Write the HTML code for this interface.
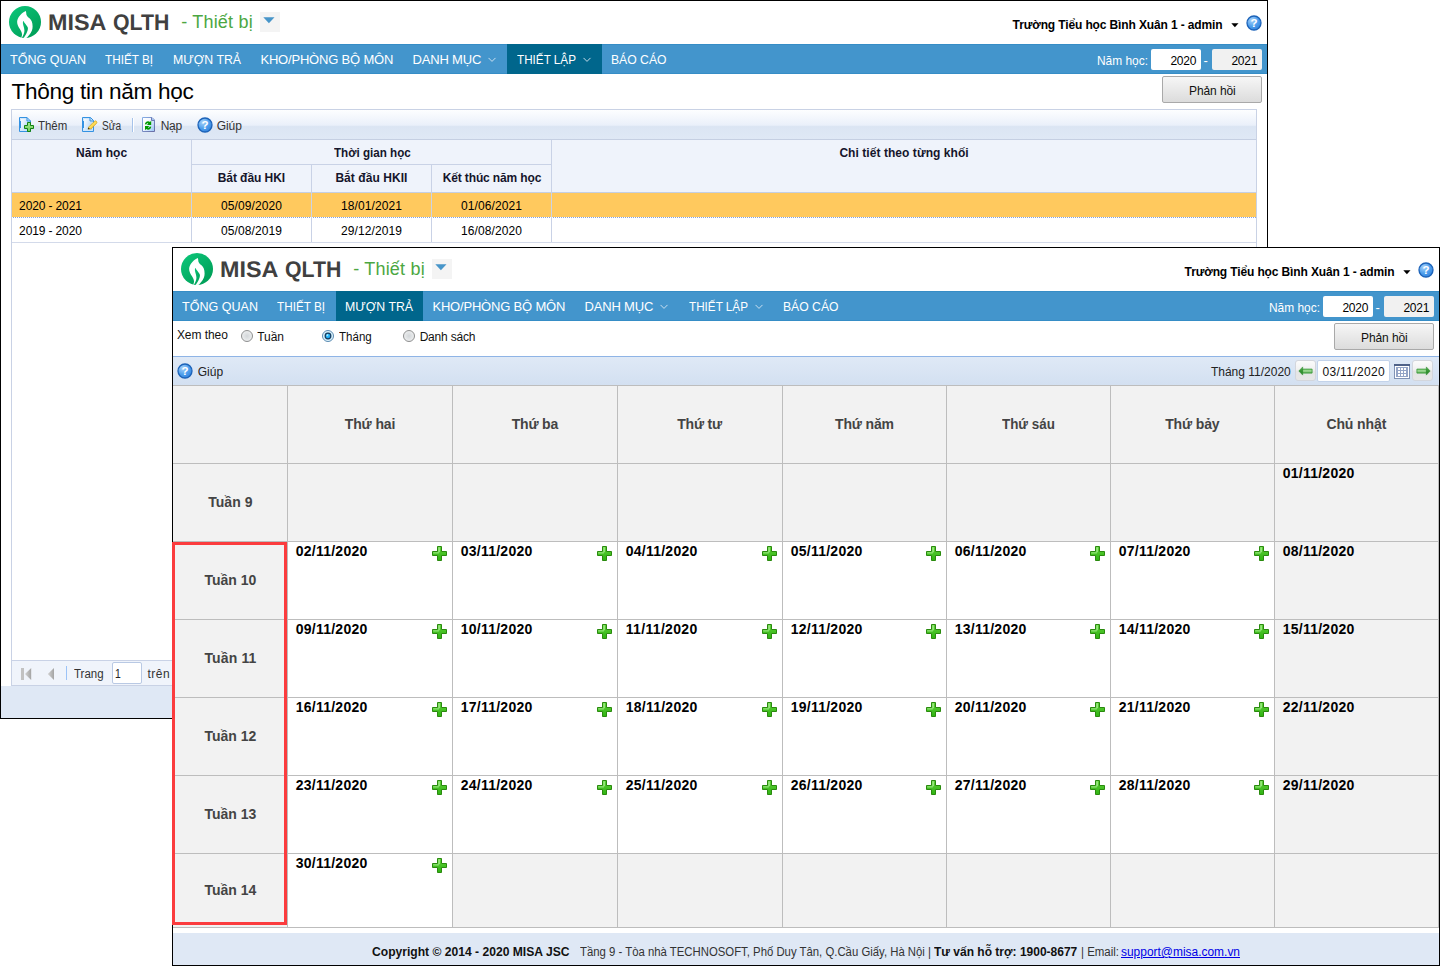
<!DOCTYPE html>
<html lang="vi"><head><meta charset="utf-8"><title>MISA QLTH - Thiết bị</title><style>
html,body{margin:0;padding:0;background:#fff}
body{width:1440px;height:966px;position:relative;overflow:hidden;font-family:"Liberation Sans",sans-serif}
.win{position:absolute;width:1268px;height:719px;background:#fff;overflow:hidden}
.frame{position:absolute;left:0;top:0;right:0;bottom:0;border:1px solid #000;pointer-events:none}
.a,.t,.btn,.panel,.tb1,.tb2,.nb{position:absolute;display:block}
.t{white-space:pre;transform-origin:0 0;margin:0;font-style:normal;font-weight:400;text-decoration:none}
.hd{position:absolute;left:0;top:0;width:1268px;height:44px}
.nav{position:absolute;left:0;top:44px;width:1268px;height:30px;background:#4395cc;box-shadow:inset 0 1px 0 #368dc6,inset 0 -1px 0 #368dc6}
.btn{box-sizing:border-box;border:1px solid #a9a9a9;border-radius:2px;background:linear-gradient(#f6f6f6,#e9e9e9 50%,#dcdcdc)}
.panel{box-sizing:border-box;border:1px solid #c9d2e5;background:#fff}
.tb1{background:linear-gradient(#fdfeff 0,#eaf0fa 52%,#dbe5f3 57%,#dfe8f5 100%)}
.tb2{box-sizing:border-box;border-top:1px solid #8fb4e6;background:linear-gradient(#dfe9f6,#d3e0f1)}
.nb{box-sizing:border-box;border:1px solid #d3d6dc;border-radius:3px;background:linear-gradient(#fbfbfb,#f1f1f1 45%,#e5e5e5 55%,#e7e7e7)}
</style></head><body><div class="win" style="left:0;top:0">
<div class="hd">
<svg class="a" style="left:9px;top:6px" width="32" height="32" viewBox="0 0 32 32"><defs><linearGradient id="lg1" x1="0.15" y1="0.1" x2="0.85" y2="0.9"><stop offset="0" stop-color="#0ac276"/><stop offset="1" stop-color="#009f58"/></linearGradient><clipPath id="lc1"><circle cx="16" cy="16" r="16"/></clipPath></defs><circle cx="16" cy="16" r="16" fill="url(#lg1)"/><g clip-path="url(#lc1)"><path fill="#fff" d="M16.7,4.9 C13.2,6.6 9.4,10 8.4,14 C7.6,17 8.8,19.5 10.5,22.5 C12,25 13.3,27 13,29 C12.9,30.3 12.5,31.2 11.8,32.2 L17.4,32.2 C20,29.5 23.6,26 23.6,20.5 C23.6,16.5 22.5,14 20.5,12.3 C18.5,11 17.2,9.5 17.2,7 C17.2,6 17,5.3 16.7,4.9 Z"/><path fill="url(#lg1)" d="M14.3,14.8 C15,16.5 17.5,19 18.6,21 C19.3,22.5 18.8,25 17.4,27.5 C16.5,29.3 15.3,31 14.3,32.3 L12.6,32.3 C14,30 15.3,27.5 15.4,25 C15.5,22.5 14.5,20.5 14,18 C13.8,16.8 13.9,15.5 14.3,14.8 Z"/></g></svg>
<b class="t" style="left:47.90px;top:10.70px;font-size:22.7px;line-height:22.7px;font-weight:700;transform:scaleX(1.0296);color:#404040;text-rendering:geometricPrecision;">MISA</b>
<b class="t" style="left:112.70px;top:10.70px;font-size:22.7px;line-height:22.7px;font-weight:700;transform:scaleX(0.9388);color:#404040;text-rendering:geometricPrecision;">QLTH</b>
<span class="t" style="left:181.20px;top:12.50px;font-size:18px;line-height:18px;letter-spacing:0.200px;color:#4ca742;">- Thiết bị</span>
<div class="a" style="left:260px;top:12px;width:20px;height:20px;background:#f4f4f4"></div>
<svg class="a" style="left:263px;top:17px" width="12" height="7" viewBox="0 0 12 7"><path d="M0.3,0.3 L11.5,0.3 L5.9,6.2 Z" fill="#4795c9"/></svg>
<b class="t" style="left:1012.60px;top:19.20px;font-size:12px;line-height:12px;font-weight:700;letter-spacing:-0.128px;color:#000;">Trường Tiểu học Bình Xuân 1 - admin</b>
<svg class="a" style="left:1231px;top:23px" width="8" height="5" viewBox="0 0 8 5"><path d="M0.3,0.2 L7.5,0.2 L3.9,4.2 Z" fill="#000"/></svg>
<svg class="a" style="left:1246px;top:15px" width="16" height="16" viewBox="0 0 16 16"><defs><radialGradient id="hg1a" cx="0.35" cy="0.3" r="0.8"><stop offset="0" stop-color="#a9d2fa"/><stop offset="0.55" stop-color="#4f9fec"/><stop offset="1" stop-color="#2f7fdc"/></radialGradient></defs><circle cx="8" cy="8" r="7" fill="url(#hg1a)" stroke="#1c62b8" stroke-width="1.3"/><text x="8" y="12" text-anchor="middle" font-family="Liberation Sans, sans-serif" font-weight="700" font-size="11.5" fill="#fff">?</text></svg>
</div>
<div class="nav">
<a class="t" style="left:10.40px;top:9.25px;font-size:13px;line-height:13px;transform:scaleX(0.9653);color:#fff;">TỔNG QUAN</a>
<a class="t" style="left:105.40px;top:9.25px;font-size:13px;line-height:13px;transform:scaleX(0.9019);color:#fff;">THIẾT BỊ</a>
<a class="t" style="left:173.40px;top:9.25px;font-size:13px;line-height:13px;transform:scaleX(0.9465);color:#fff;">MƯỢN TRẢ</a>
<a class="t" style="left:260.40px;top:9.25px;font-size:13px;line-height:13px;letter-spacing:-0.186px;color:#fff;">KHO/PHÒNG BỘ MÔN</a>
<a class="t" style="left:412.40px;top:9.25px;font-size:13px;line-height:13px;letter-spacing:-0.152px;color:#fff;">DANH MỤC</a>
<svg class="a" style="left:488.3px;top:13.3px" width="9" height="6" viewBox="0 0 9 6"><path d="M0.5,0.9 L4,4.4 L7.5,0.9" fill="none" stroke="#dbe9f5" stroke-width="0.9"/></svg>
<div class="a" style="left:507px;top:0;width:95px;height:30px;background:#00668c"></div>
<a class="t" style="left:516.90px;top:9.25px;font-size:13px;line-height:13px;transform:scaleX(0.9005);color:#fff;">THIẾT LẬP</a>
<svg class="a" style="left:582.8px;top:13.3px" width="9" height="6" viewBox="0 0 9 6"><path d="M0.5,0.9 L4,4.4 L7.5,0.9" fill="none" stroke="#dbe9f5" stroke-width="0.9"/></svg>
<a class="t" style="left:611.40px;top:9.25px;font-size:13px;line-height:13px;transform:scaleX(0.9367);color:#fff;">BÁO CÁO</a>
<span class="t" style="left:1096.60px;top:9.70px;font-size:13px;line-height:13px;transform:scaleX(0.9166);color:#fff;">Năm học:</span>
<div class="a" style="left:1151.3px;top:5.4px;width:49.5px;height:20.8px;background:#fff;border-radius:2px"></div>
<span class="t" style="left:1170.40px;top:10.70px;font-size:12px;line-height:12px;letter-spacing:-0.234px;color:#000;">2020</span>
<span class="t" style="left:1203.60px;top:9.70px;font-size:13px;line-height:13px;letter-spacing:1.056px;color:#fff;">-</span>
<div class="a" style="left:1212.2px;top:5.4px;width:49.6px;height:20.8px;background:#f1f1f1;border-radius:2px"></div>
<span class="t" style="left:1231.40px;top:10.70px;font-size:12px;line-height:12px;letter-spacing:-0.234px;color:#000;">2021</span>
</div>
<div class="btn" style="left:1162px;top:76px;width:100px;height:27px"></div>
<span class="t" style="left:1189.00px;top:84.70px;font-size:12px;line-height:12px;letter-spacing:-0.096px;color:#111;">Phản hồi</span>
<h1 class="t" style="left:11.40px;top:81.20px;font-size:22.6px;line-height:22.6px;letter-spacing:-0.290px;color:#000;">Thông tin năm học</h1>
<div class="panel" style="left:11px;top:109px;width:1246px;height:577px">
</div>
<div class="tb1" style="left:12px;top:110px;width:1244px;height:29px"></div>
<svg class="a" style="left:18px;top:116px" width="17" height="17" viewBox="0 0 17 17"><defs><linearGradient id="pg1" x1="0" y1="0" x2="1" y2="0.6"><stop offset="0" stop-color="#ffffff"/><stop offset="0.35" stop-color="#e9f3fd"/><stop offset="1" stop-color="#a9d0f6"/></linearGradient><linearGradient id="gp1" x1="0" y1="0" x2="0" y2="1"><stop offset="0" stop-color="#a3e892"/><stop offset="1" stop-color="#6fcf5a"/></linearGradient></defs><path d="M1.5,1.5 H9 L12.5,5 V15.5 H1.5 Z" fill="url(#pg1)" stroke="#3492e2" stroke-width="1"/><path d="M2.5,2.5 H8.5 V5.5 H11.5 V14.5 H2.5 Z" fill="none" stroke="#cfe6fb" stroke-width="1"/><rect x="1" y="5" width="2" height="7" fill="#3492e2"/><path d="M9,1.5 V5 H12.5" fill="none" stroke="#3492e2" stroke-width="1"/><path d="M9.5,6.5 H12.5 V9.5 H15.5 V12.5 H12.5 V15.5 H9.5 V12.5 H6.5 V9.5 H9.5 Z" fill="url(#gp1)" stroke="#128212" stroke-width="1"/></svg>
<span class="t" style="left:38.10px;top:119.50px;font-size:12px;line-height:12px;transform:scaleX(0.9548);color:#333;">Thêm</span>
<svg class="a" style="left:81px;top:116px" width="18" height="17" viewBox="0 0 18 17"><defs><linearGradient id="pg2" x1="0" y1="0" x2="1" y2="0.6"><stop offset="0" stop-color="#ffffff"/><stop offset="0.35" stop-color="#e9f3fd"/><stop offset="1" stop-color="#a9d0f6"/></linearGradient><linearGradient id="pn2" x1="0" y1="0" x2="1" y2="1"><stop offset="0" stop-color="#e2a400"/><stop offset="0.5" stop-color="#ffdf5c"/><stop offset="1" stop-color="#d89a00"/></linearGradient></defs><path d="M1.5,1.5 H9.5 L12.5,4.5 V15.5 H1.5 Z" fill="url(#pg2)" stroke="#3492e2" stroke-width="1"/><path d="M2.5,2.5 H8.5 V5.5 H11.5 V14.5 H2.5 Z" fill="none" stroke="#cfe6fb" stroke-width="1"/><rect x="1" y="5" width="2" height="7" fill="#3492e2"/><path d="M9,1.5 V5 H12.5" fill="none" stroke="#3492e2" stroke-width="1"/><path d="M7,13.1 L7.8,10.9 L13.5,5.2 A1.5,1.5 0 0 1 15.6,7.3 L9.9,13 Z" fill="url(#pn2)" stroke="#cf9708" stroke-width="0.6"/><path d="M6.9,13.2 L7.5,11.6 L8.9,13 Z" fill="#2c2412"/></svg>
<span class="t" style="left:102.00px;top:119.50px;font-size:12px;line-height:12px;transform:scaleX(0.8451);color:#333;">Sửa</span>
<div class="a" style="left:132px;top:118px;width:1px;height:14px;background:#a6c3ea"></div><div class="a" style="left:133px;top:118px;width:1px;height:14px;background:#fff"></div>
<svg class="a" style="left:141px;top:116px" width="16" height="17" viewBox="0 0 16 17"><defs><linearGradient id="pg3" x1="0" y1="0" x2="1" y2="0.7"><stop offset="0" stop-color="#ffffff"/><stop offset="0.45" stop-color="#f4f8fe"/><stop offset="1" stop-color="#a8cdf8"/></linearGradient><linearGradient id="pb3" x1="0" y1="0" x2="1" y2="1"><stop offset="0" stop-color="#86aee6"/><stop offset="1" stop-color="#686ca4"/></linearGradient></defs><path d="M1.5,1.5 H11 L13.5,4 V15.5 H1.5 Z" fill="url(#pg3)" stroke="url(#pb3)" stroke-width="1"/><path d="M10.5,1.5 V4.5 H13.5" fill="#9fc4f2" stroke="#6f79b4" stroke-width="1"/><path d="M3.9,8.2 C4.3,5.4 7.2,4.4 9,5.9 L10.2,4.7 V9 H5.9 L7.3,7.6 C6.6,7 5.6,7.4 5.4,8.5 Z" fill="#019a01"/><path d="M10.3,10.8 C9.9,13.6 7,14.6 5.2,13.1 L4,14.3 V10 H8.3 L6.9,11.4 C7.6,12 8.6,11.6 8.8,10.5 Z" fill="#019a01"/></svg>
<span class="t" style="left:160.70px;top:119.50px;font-size:12px;line-height:12px;letter-spacing:-0.308px;color:#333;">Nạp</span>
<svg class="a" style="left:196.5px;top:116.5px" width="16" height="16" viewBox="0 0 16 16"><defs><radialGradient id="hgt1" cx="0.35" cy="0.3" r="0.8"><stop offset="0" stop-color="#a9d2fa"/><stop offset="0.55" stop-color="#4f9fec"/><stop offset="1" stop-color="#2f7fdc"/></radialGradient></defs><circle cx="8" cy="8" r="7" fill="url(#hgt1)" stroke="#1c62b8" stroke-width="1.3"/><text x="8" y="12" text-anchor="middle" font-family="Liberation Sans, sans-serif" font-weight="700" font-size="11.5" fill="#fff">?</text></svg>
<span class="t" style="left:216.70px;top:119.50px;font-size:12px;line-height:12px;letter-spacing:-0.053px;color:#333;">Giúp</span>
<div class="a" style="left:12px;top:139px;width:1244px;height:1px;background:#c5cfe2"></div>
<div class="a" style="left:12px;top:140px;width:1244px;height:52px;background:#eff3fb"></div>
<div class="a" style="left:12px;top:192px;width:1244px;height:1px;background:#c5cfe2"></div>
<div class="a" style="left:12px;top:193px;width:1244px;height:24px;background:#ffc95e"></div>
<div class="a" style="left:12px;top:217px;width:1244px;height:1px;background:repeating-linear-gradient(90deg,#fff 0 1px,#86a3e2 1px 2px)"></div>
<div class="a" style="left:12px;top:242px;width:1244px;height:1px;background:#d3daea"></div>
<div class="a" style="left:191px;top:140px;width:1px;height:102px;background:#c9d2e6"></div>
<div class="a" style="left:311px;top:165px;width:1px;height:77px;background:#c9d2e6"></div>
<div class="a" style="left:431px;top:165px;width:1px;height:77px;background:#c9d2e6"></div>
<div class="a" style="left:551px;top:140px;width:1px;height:102px;background:#c9d2e6"></div>
<div class="a" style="left:192px;top:164px;width:359px;height:1px;background:#c9d2e6"></div>
<b class="t" style="left:76.10px;top:146.80px;font-size:12px;line-height:12px;font-weight:700;letter-spacing:0.052px;color:#15152b;">Năm học</b>
<b class="t" style="left:333.60px;top:146.80px;font-size:12px;line-height:12px;font-weight:700;transform:scaleX(0.9697);color:#15152b;">Thời gian học</b>
<b class="t" style="left:839.40px;top:146.80px;font-size:12px;line-height:12px;font-weight:700;letter-spacing:0.058px;color:#15152b;">Chi tiết theo từng khối</b>
<b class="t" style="left:217.70px;top:171.70px;font-size:12px;line-height:12px;font-weight:700;letter-spacing:-0.062px;color:#15152b;">Bắt đầu HKI</b>
<b class="t" style="left:335.40px;top:171.70px;font-size:12px;line-height:12px;font-weight:700;letter-spacing:0.060px;color:#15152b;">Bắt đầu HKII</b>
<b class="t" style="left:442.70px;top:171.70px;font-size:12px;line-height:12px;font-weight:700;letter-spacing:-0.133px;color:#15152b;">Kết thúc năm học</b>
<span class="t" style="left:19.10px;top:199.50px;font-size:12px;line-height:12px;letter-spacing:-0.126px;color:#000;">2020 - 2021</span>
<span class="t" style="left:221.10px;top:199.50px;font-size:12px;line-height:12px;letter-spacing:0.082px;color:#000;">05/09/2020</span>
<span class="t" style="left:341.10px;top:199.50px;font-size:12px;line-height:12px;letter-spacing:0.082px;color:#000;">18/01/2021</span>
<span class="t" style="left:461.10px;top:199.50px;font-size:12px;line-height:12px;letter-spacing:0.082px;color:#000;">01/06/2021</span>
<span class="t" style="left:19.10px;top:224.50px;font-size:12px;line-height:12px;letter-spacing:-0.126px;color:#000;">2019 - 2020</span>
<span class="t" style="left:221.10px;top:224.50px;font-size:12px;line-height:12px;letter-spacing:0.082px;color:#000;">05/08/2019</span>
<span class="t" style="left:341.10px;top:224.50px;font-size:12px;line-height:12px;letter-spacing:0.082px;color:#000;">29/12/2019</span>
<span class="t" style="left:461.10px;top:224.50px;font-size:12px;line-height:12px;letter-spacing:0.082px;color:#000;">16/08/2020</span>
<div class="a" style="left:12px;top:660px;width:1244px;height:1px;background:#c9d2e6"></div>
<div class="a" style="left:12px;top:661px;width:1244px;height:24px;background:#f0f4fb"></div>
<svg class="a" style="left:20px;top:667px" width="14" height="14" viewBox="0 0 14 14"><defs><linearGradient id="gg1" x1="0" y1="0" x2="1" y2="0"><stop offset="0" stop-color="#d2d2d2"/><stop offset="1" stop-color="#a4a4a4"/></linearGradient></defs><rect x="1" y="1" width="3" height="12" fill="#c2c2c2"/><path d="M5,7 L11.2,1 L11.2,13 Z" fill="url(#gg1)"/></svg>
<svg class="a" style="left:47px;top:667px" width="8" height="14" viewBox="0 0 8 14"><path d="M0.8,7 L7,1 L7,13 Z" fill="url(#gg1)"/></svg>
<div class="a" style="left:66px;top:666px;width:1px;height:14px;background:#9cc3f7"></div>
<span class="t" style="left:73.80px;top:667.90px;font-size:12px;line-height:12px;transform:scaleX(0.9577);color:#333;">Trang</span>
<div class="a" style="left:112px;top:662px;width:30px;height:22px;box-sizing:border-box;border:1px solid #b9c9e4;border-radius:2px;background:#fff"></div>
<span class="t" style="left:115.20px;top:667.90px;font-size:12px;line-height:12px;transform:scaleX(0.8673);color:#222;">1</span>
<span class="t" style="left:147.40px;top:667.90px;font-size:12px;line-height:12px;letter-spacing:0.571px;color:#333;">trên</span>
<div class="a" style="left:1px;top:686px;width:1266px;height:32px;background:#dfe8f5"></div>
<div class="frame"></div></div>
<div class="win" style="left:172px;top:247px">
<div class="hd">
<svg class="a" style="left:9px;top:6px" width="32" height="32" viewBox="0 0 32 32"><defs><linearGradient id="lg2" x1="0.15" y1="0.1" x2="0.85" y2="0.9"><stop offset="0" stop-color="#0ac276"/><stop offset="1" stop-color="#009f58"/></linearGradient><clipPath id="lc2"><circle cx="16" cy="16" r="16"/></clipPath></defs><circle cx="16" cy="16" r="16" fill="url(#lg2)"/><g clip-path="url(#lc2)"><path fill="#fff" d="M16.7,4.9 C13.2,6.6 9.4,10 8.4,14 C7.6,17 8.8,19.5 10.5,22.5 C12,25 13.3,27 13,29 C12.9,30.3 12.5,31.2 11.8,32.2 L17.4,32.2 C20,29.5 23.6,26 23.6,20.5 C23.6,16.5 22.5,14 20.5,12.3 C18.5,11 17.2,9.5 17.2,7 C17.2,6 17,5.3 16.7,4.9 Z"/><path fill="url(#lg2)" d="M14.3,14.8 C15,16.5 17.5,19 18.6,21 C19.3,22.5 18.8,25 17.4,27.5 C16.5,29.3 15.3,31 14.3,32.3 L12.6,32.3 C14,30 15.3,27.5 15.4,25 C15.5,22.5 14.5,20.5 14,18 C13.8,16.8 13.9,15.5 14.3,14.8 Z"/></g></svg>
<b class="t" style="left:47.90px;top:10.70px;font-size:22.7px;line-height:22.7px;font-weight:700;transform:scaleX(1.0296);color:#404040;text-rendering:geometricPrecision;">MISA</b>
<b class="t" style="left:112.70px;top:10.70px;font-size:22.7px;line-height:22.7px;font-weight:700;transform:scaleX(0.9388);color:#404040;text-rendering:geometricPrecision;">QLTH</b>
<span class="t" style="left:181.20px;top:12.50px;font-size:18px;line-height:18px;letter-spacing:0.200px;color:#4ca742;">- Thiết bị</span>
<div class="a" style="left:260px;top:12px;width:20px;height:20px;background:#f4f4f4"></div>
<svg class="a" style="left:263px;top:17px" width="12" height="7" viewBox="0 0 12 7"><path d="M0.3,0.3 L11.5,0.3 L5.9,6.2 Z" fill="#4795c9"/></svg>
<b class="t" style="left:1012.60px;top:19.20px;font-size:12px;line-height:12px;font-weight:700;letter-spacing:-0.128px;color:#000;">Trường Tiểu học Bình Xuân 1 - admin</b>
<svg class="a" style="left:1231px;top:23px" width="8" height="5" viewBox="0 0 8 5"><path d="M0.3,0.2 L7.5,0.2 L3.9,4.2 Z" fill="#000"/></svg>
<svg class="a" style="left:1246px;top:15px" width="16" height="16" viewBox="0 0 16 16"><defs><radialGradient id="hg2a" cx="0.35" cy="0.3" r="0.8"><stop offset="0" stop-color="#a9d2fa"/><stop offset="0.55" stop-color="#4f9fec"/><stop offset="1" stop-color="#2f7fdc"/></radialGradient></defs><circle cx="8" cy="8" r="7" fill="url(#hg2a)" stroke="#1c62b8" stroke-width="1.3"/><text x="8" y="12" text-anchor="middle" font-family="Liberation Sans, sans-serif" font-weight="700" font-size="11.5" fill="#fff">?</text></svg>
</div>
<div class="nav">
<a class="t" style="left:10.40px;top:9.25px;font-size:13px;line-height:13px;transform:scaleX(0.9653);color:#fff;">TỔNG QUAN</a>
<a class="t" style="left:105.40px;top:9.25px;font-size:13px;line-height:13px;transform:scaleX(0.9019);color:#fff;">THIẾT BỊ</a>
<div class="a" style="left:164px;top:0;width:87px;height:30px;background:#00668c"></div>
<a class="t" style="left:173.40px;top:9.25px;font-size:13px;line-height:13px;transform:scaleX(0.9465);color:#fff;">MƯỢN TRẢ</a>
<a class="t" style="left:260.40px;top:9.25px;font-size:13px;line-height:13px;letter-spacing:-0.186px;color:#fff;">KHO/PHÒNG BỘ MÔN</a>
<a class="t" style="left:412.40px;top:9.25px;font-size:13px;line-height:13px;letter-spacing:-0.152px;color:#fff;">DANH MỤC</a>
<svg class="a" style="left:488.3px;top:13.3px" width="9" height="6" viewBox="0 0 9 6"><path d="M0.5,0.9 L4,4.4 L7.5,0.9" fill="none" stroke="#dbe9f5" stroke-width="0.9"/></svg>
<a class="t" style="left:516.90px;top:9.25px;font-size:13px;line-height:13px;transform:scaleX(0.9005);color:#fff;">THIẾT LẬP</a>
<svg class="a" style="left:582.8px;top:13.3px" width="9" height="6" viewBox="0 0 9 6"><path d="M0.5,0.9 L4,4.4 L7.5,0.9" fill="none" stroke="#dbe9f5" stroke-width="0.9"/></svg>
<a class="t" style="left:611.40px;top:9.25px;font-size:13px;line-height:13px;transform:scaleX(0.9367);color:#fff;">BÁO CÁO</a>
<span class="t" style="left:1096.60px;top:9.70px;font-size:13px;line-height:13px;transform:scaleX(0.9166);color:#fff;">Năm học:</span>
<div class="a" style="left:1151.3px;top:5.4px;width:49.5px;height:20.8px;background:#fff;border-radius:2px"></div>
<span class="t" style="left:1170.40px;top:10.70px;font-size:12px;line-height:12px;letter-spacing:-0.234px;color:#000;">2020</span>
<span class="t" style="left:1203.60px;top:9.70px;font-size:13px;line-height:13px;letter-spacing:1.056px;color:#fff;">-</span>
<div class="a" style="left:1212.2px;top:5.4px;width:49.6px;height:20.8px;background:#f1f1f1;border-radius:2px"></div>
<span class="t" style="left:1231.40px;top:10.70px;font-size:12px;line-height:12px;letter-spacing:-0.234px;color:#000;">2021</span>
</div>
<div class="btn" style="left:1162px;top:76px;width:100px;height:27px"></div>
<span class="t" style="left:1189.00px;top:84.70px;font-size:12px;line-height:12px;letter-spacing:-0.096px;color:#111;">Phản hồi</span>
<span class="t" style="left:4.90px;top:82.25px;font-size:12px;line-height:12px;letter-spacing:-0.054px;color:#111;">Xem theo</span>
<svg class="a" style="left:69px;top:83px" width="13" height="13" viewBox="0 0 13 13"><defs><radialGradient id="rg1" cx="0.5" cy="0.5" r="0.6"><stop offset="0" stop-color="#d2d6d9"/><stop offset="0.7" stop-color="#e9ebec"/><stop offset="1" stop-color="#fbfbfb"/></radialGradient></defs><circle cx="6" cy="6" r="5.5" fill="url(#rg1)" stroke="#8e8f8f" stroke-width="1"/></svg>
<span class="t" style="left:85.30px;top:84.00px;font-size:12px;line-height:12px;letter-spacing:-0.069px;color:#111;">Tuần</span>
<svg class="a" style="left:150px;top:83px" width="13" height="13" viewBox="0 0 13 13"><defs><radialGradient id="rg2" cx="0.5" cy="0.5" r="0.5"><stop offset="0.55" stop-color="#a9dcf5"/><stop offset="0.85" stop-color="#e6f6fd"/><stop offset="1" stop-color="#d4eefa"/></radialGradient><radialGradient id="rc2" cx="0.35" cy="0.3" r="0.8"><stop offset="0" stop-color="#e8fbff"/><stop offset="0.35" stop-color="#2fc0ff"/><stop offset="1" stop-color="#169ff2"/></radialGradient></defs><circle cx="6" cy="6" r="5.5" fill="url(#rg2)" stroke="#5b8bb2" stroke-width="1"/><circle cx="6" cy="6" r="3.4" fill="#183b5d"/><circle cx="6" cy="6" r="2.2" fill="url(#rc2)"/></svg>
<span class="t" style="left:166.90px;top:84.00px;font-size:12px;line-height:12px;transform:scaleX(0.9624);color:#111;">Tháng</span>
<svg class="a" style="left:231px;top:83px" width="13" height="13" viewBox="0 0 13 13"><defs><radialGradient id="rg3" cx="0.5" cy="0.5" r="0.6"><stop offset="0" stop-color="#d2d6d9"/><stop offset="0.7" stop-color="#e9ebec"/><stop offset="1" stop-color="#fbfbfb"/></radialGradient></defs><circle cx="6" cy="6" r="5.5" fill="url(#rg3)" stroke="#8e8f8f" stroke-width="1"/></svg>
<span class="t" style="left:247.65px;top:84.00px;font-size:12px;line-height:12px;letter-spacing:-0.203px;color:#111;">Danh sách</span>
<div class="tb2" style="left:1px;top:109px;width:1266px;height:29px"></div>
<svg class="a" style="left:5.300000000000011px;top:115.80000000000001px" width="16" height="16" viewBox="0 0 16 16"><defs><radialGradient id="hgt2" cx="0.35" cy="0.3" r="0.8"><stop offset="0" stop-color="#a9d2fa"/><stop offset="0.55" stop-color="#4f9fec"/><stop offset="1" stop-color="#2f7fdc"/></radialGradient></defs><circle cx="8" cy="8" r="7" fill="url(#hgt2)" stroke="#1c62b8" stroke-width="1.3"/><text x="8" y="12" text-anchor="middle" font-family="Liberation Sans, sans-serif" font-weight="700" font-size="11.5" fill="#fff">?</text></svg>
<span class="t" style="left:25.70px;top:119.00px;font-size:12px;line-height:12px;letter-spacing:0.014px;color:#222;">Giúp</span>
<span class="t" style="left:1038.90px;top:118.70px;font-size:12px;line-height:12px;color:#222;">Tháng 11/2020</span>
<div class="nb" style="left:1123.4px;top:113.4px;width:20.6px;height:21px"></div>
<svg class="a" style="left:1126.1px;top:119.10000000000002px" width="15" height="10" viewBox="0 0 15 10"><defs><linearGradient id="ag1" x1="0" y1="0" x2="0" y2="1"><stop offset="0" stop-color="#6fc262"/><stop offset="0.45" stop-color="#a6dc9c"/><stop offset="1" stop-color="#4aa544"/></linearGradient><linearGradient id="ah1" x1="0" y1="0" x2="0" y2="1"><stop offset="0" stop-color="#4fae48"/><stop offset="1" stop-color="#1f7d1f"/></linearGradient></defs><g transform="translate(15,0) scale(-1,1)"><path d="M0.9,3.1 H10.6 V7.1 H0.9 Z" fill="url(#ag1)" stroke="#3a9a3a" stroke-width="0.8"/><path d="M10.3,0.9 L14.2,5 L10.3,9.1 Z" fill="url(#ah1)" stroke="#2b8a2b" stroke-width="0.5"/></g></svg>
<div class="a" style="left:1145px;top:113px;width:73px;height:22px;box-sizing:border-box;border:1px solid #c3d3ea;border-radius:2px;background:#fff"></div>
<span class="t" style="left:1150.40px;top:118.80px;font-size:12px;line-height:12px;letter-spacing:0.348px;color:#111;">03/11/2020</span>
<svg class="a" style="left:1222px;top:117px" width="16" height="15" viewBox="0 0 16 15"><rect x="0.5" y="1.5" width="15" height="13" fill="#fff" stroke="#7f92b5" stroke-width="1"/><rect x="0" y="0" width="16" height="2" fill="#4f6288"/><rect x="2" y="3" width="12" height="10" fill="#93a4c6"/><g fill="#fff"><rect x="4" y="4" width="2" height="2"/><rect x="7" y="4" width="2" height="2"/><rect x="10" y="4" width="2" height="2"/><rect x="4" y="7" width="2" height="2"/><rect x="7" y="7" width="2" height="2"/><rect x="10" y="7" width="2" height="2"/><rect x="4" y="10" width="2" height="2"/><rect x="7" y="10" width="2" height="2"/><rect x="10" y="10" width="2" height="2"/></g></svg>
<div class="nb" style="left:1240.4px;top:113.4px;width:21px;height:21px"></div>
<svg class="a" style="left:1243.6px;top:119.10000000000002px" width="15" height="10" viewBox="0 0 15 10"><defs><linearGradient id="ag2" x1="0" y1="0" x2="0" y2="1"><stop offset="0" stop-color="#6fc262"/><stop offset="0.45" stop-color="#a6dc9c"/><stop offset="1" stop-color="#4aa544"/></linearGradient><linearGradient id="ah2" x1="0" y1="0" x2="0" y2="1"><stop offset="0" stop-color="#4fae48"/><stop offset="1" stop-color="#1f7d1f"/></linearGradient></defs><g transform=""><path d="M0.9,3.1 H10.6 V7.1 H0.9 Z" fill="url(#ag2)" stroke="#3a9a3a" stroke-width="0.8"/><path d="M10.3,0.9 L14.2,5 L10.3,9.1 Z" fill="url(#ah2)" stroke="#2b8a2b" stroke-width="0.5"/></g></svg>
<div class="a" style="left:1px;top:138px;width:1266px;height:543px;background:#bdbdbd"></div>
<svg width="0" height="0" style="position:absolute"><defs><linearGradient id="plg" x1="0" y1="0" x2="0" y2="1"><stop offset="0" stop-color="#5fd038"/><stop offset="1" stop-color="#2fb312"/></linearGradient></defs></svg>
<div class="a" style="left:1px;top:139px;width:114px;height:77px;background:#f2f2f2"></div>
<div class="a" style="left:116px;top:139px;width:164px;height:77px;background:#f2f2f2"></div>
<b class="t" style="left:172.70px;top:170.00px;font-size:14px;line-height:14px;font-weight:700;letter-spacing:-0.110px;color:#444;">Thứ hai</b>
<div class="a" style="left:281px;top:139px;width:164px;height:77px;background:#f2f2f2"></div>
<b class="t" style="left:339.70px;top:170.00px;font-size:14px;line-height:14px;font-weight:700;letter-spacing:-0.194px;color:#444;">Thứ ba</b>
<div class="a" style="left:446px;top:139px;width:164px;height:77px;background:#f2f2f2"></div>
<b class="t" style="left:505.20px;top:170.00px;font-size:14px;line-height:14px;font-weight:700;letter-spacing:-0.188px;color:#444;">Thứ tư</b>
<div class="a" style="left:611px;top:139px;width:163px;height:77px;background:#f2f2f2"></div>
<b class="t" style="left:663.00px;top:170.00px;font-size:14px;line-height:14px;font-weight:700;letter-spacing:-0.154px;color:#444;">Thứ năm</b>
<div class="a" style="left:775px;top:139px;width:163px;height:77px;background:#f2f2f2"></div>
<b class="t" style="left:830.00px;top:170.00px;font-size:14px;line-height:14px;font-weight:700;transform:scaleX(0.9572);color:#444;">Thứ sáu</b>
<div class="a" style="left:939px;top:139px;width:163px;height:77px;background:#f2f2f2"></div>
<b class="t" style="left:993.20px;top:170.00px;font-size:14px;line-height:14px;font-weight:700;letter-spacing:-0.144px;color:#444;">Thứ bảy</b>
<div class="a" style="left:1103px;top:139px;width:163px;height:77px;background:#f2f2f2"></div>
<b class="t" style="left:1154.40px;top:170.00px;font-size:14px;line-height:14px;font-weight:700;letter-spacing:-0.094px;color:#444;">Chủ nhật</b>
<div class="a" style="left:1px;top:217px;width:114px;height:77px;background:#f2f2f2"></div>
<b class="t" style="left:36.15px;top:248.40px;font-size:14px;line-height:14px;font-weight:700;letter-spacing:0.084px;color:#444;">Tuần 9</b>
<div class="a" style="left:116px;top:217px;width:164px;height:77px;background:#f2f2f2"></div>
<div class="a" style="left:281px;top:217px;width:164px;height:77px;background:#f2f2f2"></div>
<div class="a" style="left:446px;top:217px;width:164px;height:77px;background:#f2f2f2"></div>
<div class="a" style="left:611px;top:217px;width:163px;height:77px;background:#f2f2f2"></div>
<div class="a" style="left:775px;top:217px;width:163px;height:77px;background:#f2f2f2"></div>
<div class="a" style="left:939px;top:217px;width:163px;height:77px;background:#f2f2f2"></div>
<div class="a" style="left:1103px;top:217px;width:163px;height:77px;background:#f2f2f2"></div>
<b class="t" style="left:1110.70px;top:218.50px;font-size:14px;line-height:14px;font-weight:700;letter-spacing:0.256px;color:#000;">01/11/2020</b>
<div class="a" style="left:1px;top:295px;width:114px;height:77px;background:#f2f2f2"></div>
<b class="t" style="left:32.40px;top:326.40px;font-size:14px;line-height:14px;font-weight:700;letter-spacing:0.021px;color:#444;">Tuần 10</b>
<div class="a" style="left:116px;top:295px;width:164px;height:77px;background:#fff"></div>
<b class="t" style="left:123.70px;top:296.50px;font-size:14px;line-height:14px;font-weight:700;letter-spacing:0.256px;color:#000;">02/11/2020</b>
<svg class="a" style="left:260px;top:299px" width="15" height="15" viewBox="0 0 15 15"><path d="M5.5,0.5 H9.5 V5.5 H14.5 V9.5 H9.5 V14.5 H5.5 V9.5 H0.5 V5.5 H5.5 Z" fill="url(#plg)" stroke="#2a8a0e" stroke-width="1"/><path d="M6.2,1.2 H8 V6.2 H6.8 V7.6 H1.2 V6.2 H6.2 Z" fill="#a4ee8c" opacity="0.8"/></svg>
<div class="a" style="left:281px;top:295px;width:164px;height:77px;background:#fff"></div>
<b class="t" style="left:288.70px;top:296.50px;font-size:14px;line-height:14px;font-weight:700;letter-spacing:0.256px;color:#000;">03/11/2020</b>
<svg class="a" style="left:425px;top:299px" width="15" height="15" viewBox="0 0 15 15"><path d="M5.5,0.5 H9.5 V5.5 H14.5 V9.5 H9.5 V14.5 H5.5 V9.5 H0.5 V5.5 H5.5 Z" fill="url(#plg)" stroke="#2a8a0e" stroke-width="1"/><path d="M6.2,1.2 H8 V6.2 H6.8 V7.6 H1.2 V6.2 H6.2 Z" fill="#a4ee8c" opacity="0.8"/></svg>
<div class="a" style="left:446px;top:295px;width:164px;height:77px;background:#fff"></div>
<b class="t" style="left:453.70px;top:296.50px;font-size:14px;line-height:14px;font-weight:700;letter-spacing:0.256px;color:#000;">04/11/2020</b>
<svg class="a" style="left:590px;top:299px" width="15" height="15" viewBox="0 0 15 15"><path d="M5.5,0.5 H9.5 V5.5 H14.5 V9.5 H9.5 V14.5 H5.5 V9.5 H0.5 V5.5 H5.5 Z" fill="url(#plg)" stroke="#2a8a0e" stroke-width="1"/><path d="M6.2,1.2 H8 V6.2 H6.8 V7.6 H1.2 V6.2 H6.2 Z" fill="#a4ee8c" opacity="0.8"/></svg>
<div class="a" style="left:611px;top:295px;width:163px;height:77px;background:#fff"></div>
<b class="t" style="left:618.70px;top:296.50px;font-size:14px;line-height:14px;font-weight:700;letter-spacing:0.256px;color:#000;">05/11/2020</b>
<svg class="a" style="left:754px;top:299px" width="15" height="15" viewBox="0 0 15 15"><path d="M5.5,0.5 H9.5 V5.5 H14.5 V9.5 H9.5 V14.5 H5.5 V9.5 H0.5 V5.5 H5.5 Z" fill="url(#plg)" stroke="#2a8a0e" stroke-width="1"/><path d="M6.2,1.2 H8 V6.2 H6.8 V7.6 H1.2 V6.2 H6.2 Z" fill="#a4ee8c" opacity="0.8"/></svg>
<div class="a" style="left:775px;top:295px;width:163px;height:77px;background:#fff"></div>
<b class="t" style="left:782.70px;top:296.50px;font-size:14px;line-height:14px;font-weight:700;letter-spacing:0.256px;color:#000;">06/11/2020</b>
<svg class="a" style="left:918px;top:299px" width="15" height="15" viewBox="0 0 15 15"><path d="M5.5,0.5 H9.5 V5.5 H14.5 V9.5 H9.5 V14.5 H5.5 V9.5 H0.5 V5.5 H5.5 Z" fill="url(#plg)" stroke="#2a8a0e" stroke-width="1"/><path d="M6.2,1.2 H8 V6.2 H6.8 V7.6 H1.2 V6.2 H6.2 Z" fill="#a4ee8c" opacity="0.8"/></svg>
<div class="a" style="left:939px;top:295px;width:163px;height:77px;background:#fff"></div>
<b class="t" style="left:946.70px;top:296.50px;font-size:14px;line-height:14px;font-weight:700;letter-spacing:0.256px;color:#000;">07/11/2020</b>
<svg class="a" style="left:1082px;top:299px" width="15" height="15" viewBox="0 0 15 15"><path d="M5.5,0.5 H9.5 V5.5 H14.5 V9.5 H9.5 V14.5 H5.5 V9.5 H0.5 V5.5 H5.5 Z" fill="url(#plg)" stroke="#2a8a0e" stroke-width="1"/><path d="M6.2,1.2 H8 V6.2 H6.8 V7.6 H1.2 V6.2 H6.2 Z" fill="#a4ee8c" opacity="0.8"/></svg>
<div class="a" style="left:1103px;top:295px;width:163px;height:77px;background:#f2f2f2"></div>
<b class="t" style="left:1110.70px;top:296.50px;font-size:14px;line-height:14px;font-weight:700;letter-spacing:0.256px;color:#000;">08/11/2020</b>
<div class="a" style="left:1px;top:373px;width:114px;height:77px;background:#f2f2f2"></div>
<b class="t" style="left:32.40px;top:404.40px;font-size:14px;line-height:14px;font-weight:700;letter-spacing:0.151px;color:#444;">Tuần 11</b>
<div class="a" style="left:116px;top:373px;width:164px;height:77px;background:#fff"></div>
<b class="t" style="left:123.70px;top:374.50px;font-size:14px;line-height:14px;font-weight:700;letter-spacing:0.256px;color:#000;">09/11/2020</b>
<svg class="a" style="left:260px;top:377px" width="15" height="15" viewBox="0 0 15 15"><path d="M5.5,0.5 H9.5 V5.5 H14.5 V9.5 H9.5 V14.5 H5.5 V9.5 H0.5 V5.5 H5.5 Z" fill="url(#plg)" stroke="#2a8a0e" stroke-width="1"/><path d="M6.2,1.2 H8 V6.2 H6.8 V7.6 H1.2 V6.2 H6.2 Z" fill="#a4ee8c" opacity="0.8"/></svg>
<div class="a" style="left:281px;top:373px;width:164px;height:77px;background:#fff"></div>
<b class="t" style="left:288.70px;top:374.50px;font-size:14px;line-height:14px;font-weight:700;letter-spacing:0.256px;color:#000;">10/11/2020</b>
<svg class="a" style="left:425px;top:377px" width="15" height="15" viewBox="0 0 15 15"><path d="M5.5,0.5 H9.5 V5.5 H14.5 V9.5 H9.5 V14.5 H5.5 V9.5 H0.5 V5.5 H5.5 Z" fill="url(#plg)" stroke="#2a8a0e" stroke-width="1"/><path d="M6.2,1.2 H8 V6.2 H6.8 V7.6 H1.2 V6.2 H6.2 Z" fill="#a4ee8c" opacity="0.8"/></svg>
<div class="a" style="left:446px;top:373px;width:164px;height:77px;background:#fff"></div>
<b class="t" style="left:453.70px;top:374.50px;font-size:14px;line-height:14px;font-weight:700;letter-spacing:0.341px;color:#000;">11/11/2020</b>
<svg class="a" style="left:590px;top:377px" width="15" height="15" viewBox="0 0 15 15"><path d="M5.5,0.5 H9.5 V5.5 H14.5 V9.5 H9.5 V14.5 H5.5 V9.5 H0.5 V5.5 H5.5 Z" fill="url(#plg)" stroke="#2a8a0e" stroke-width="1"/><path d="M6.2,1.2 H8 V6.2 H6.8 V7.6 H1.2 V6.2 H6.2 Z" fill="#a4ee8c" opacity="0.8"/></svg>
<div class="a" style="left:611px;top:373px;width:163px;height:77px;background:#fff"></div>
<b class="t" style="left:618.70px;top:374.50px;font-size:14px;line-height:14px;font-weight:700;letter-spacing:0.256px;color:#000;">12/11/2020</b>
<svg class="a" style="left:754px;top:377px" width="15" height="15" viewBox="0 0 15 15"><path d="M5.5,0.5 H9.5 V5.5 H14.5 V9.5 H9.5 V14.5 H5.5 V9.5 H0.5 V5.5 H5.5 Z" fill="url(#plg)" stroke="#2a8a0e" stroke-width="1"/><path d="M6.2,1.2 H8 V6.2 H6.8 V7.6 H1.2 V6.2 H6.2 Z" fill="#a4ee8c" opacity="0.8"/></svg>
<div class="a" style="left:775px;top:373px;width:163px;height:77px;background:#fff"></div>
<b class="t" style="left:782.70px;top:374.50px;font-size:14px;line-height:14px;font-weight:700;letter-spacing:0.256px;color:#000;">13/11/2020</b>
<svg class="a" style="left:918px;top:377px" width="15" height="15" viewBox="0 0 15 15"><path d="M5.5,0.5 H9.5 V5.5 H14.5 V9.5 H9.5 V14.5 H5.5 V9.5 H0.5 V5.5 H5.5 Z" fill="url(#plg)" stroke="#2a8a0e" stroke-width="1"/><path d="M6.2,1.2 H8 V6.2 H6.8 V7.6 H1.2 V6.2 H6.2 Z" fill="#a4ee8c" opacity="0.8"/></svg>
<div class="a" style="left:939px;top:373px;width:163px;height:77px;background:#fff"></div>
<b class="t" style="left:946.70px;top:374.50px;font-size:14px;line-height:14px;font-weight:700;letter-spacing:0.256px;color:#000;">14/11/2020</b>
<svg class="a" style="left:1082px;top:377px" width="15" height="15" viewBox="0 0 15 15"><path d="M5.5,0.5 H9.5 V5.5 H14.5 V9.5 H9.5 V14.5 H5.5 V9.5 H0.5 V5.5 H5.5 Z" fill="url(#plg)" stroke="#2a8a0e" stroke-width="1"/><path d="M6.2,1.2 H8 V6.2 H6.8 V7.6 H1.2 V6.2 H6.2 Z" fill="#a4ee8c" opacity="0.8"/></svg>
<div class="a" style="left:1103px;top:373px;width:163px;height:77px;background:#f2f2f2"></div>
<b class="t" style="left:1110.70px;top:374.50px;font-size:14px;line-height:14px;font-weight:700;letter-spacing:0.256px;color:#000;">15/11/2020</b>
<div class="a" style="left:1px;top:451px;width:114px;height:77px;background:#f2f2f2"></div>
<b class="t" style="left:32.40px;top:482.40px;font-size:14px;line-height:14px;font-weight:700;letter-spacing:0.021px;color:#444;">Tuần 12</b>
<div class="a" style="left:116px;top:451px;width:164px;height:77px;background:#fff"></div>
<b class="t" style="left:123.70px;top:452.50px;font-size:14px;line-height:14px;font-weight:700;letter-spacing:0.256px;color:#000;">16/11/2020</b>
<svg class="a" style="left:260px;top:455px" width="15" height="15" viewBox="0 0 15 15"><path d="M5.5,0.5 H9.5 V5.5 H14.5 V9.5 H9.5 V14.5 H5.5 V9.5 H0.5 V5.5 H5.5 Z" fill="url(#plg)" stroke="#2a8a0e" stroke-width="1"/><path d="M6.2,1.2 H8 V6.2 H6.8 V7.6 H1.2 V6.2 H6.2 Z" fill="#a4ee8c" opacity="0.8"/></svg>
<div class="a" style="left:281px;top:451px;width:164px;height:77px;background:#fff"></div>
<b class="t" style="left:288.70px;top:452.50px;font-size:14px;line-height:14px;font-weight:700;letter-spacing:0.256px;color:#000;">17/11/2020</b>
<svg class="a" style="left:425px;top:455px" width="15" height="15" viewBox="0 0 15 15"><path d="M5.5,0.5 H9.5 V5.5 H14.5 V9.5 H9.5 V14.5 H5.5 V9.5 H0.5 V5.5 H5.5 Z" fill="url(#plg)" stroke="#2a8a0e" stroke-width="1"/><path d="M6.2,1.2 H8 V6.2 H6.8 V7.6 H1.2 V6.2 H6.2 Z" fill="#a4ee8c" opacity="0.8"/></svg>
<div class="a" style="left:446px;top:451px;width:164px;height:77px;background:#fff"></div>
<b class="t" style="left:453.70px;top:452.50px;font-size:14px;line-height:14px;font-weight:700;letter-spacing:0.256px;color:#000;">18/11/2020</b>
<svg class="a" style="left:590px;top:455px" width="15" height="15" viewBox="0 0 15 15"><path d="M5.5,0.5 H9.5 V5.5 H14.5 V9.5 H9.5 V14.5 H5.5 V9.5 H0.5 V5.5 H5.5 Z" fill="url(#plg)" stroke="#2a8a0e" stroke-width="1"/><path d="M6.2,1.2 H8 V6.2 H6.8 V7.6 H1.2 V6.2 H6.2 Z" fill="#a4ee8c" opacity="0.8"/></svg>
<div class="a" style="left:611px;top:451px;width:163px;height:77px;background:#fff"></div>
<b class="t" style="left:618.70px;top:452.50px;font-size:14px;line-height:14px;font-weight:700;letter-spacing:0.256px;color:#000;">19/11/2020</b>
<svg class="a" style="left:754px;top:455px" width="15" height="15" viewBox="0 0 15 15"><path d="M5.5,0.5 H9.5 V5.5 H14.5 V9.5 H9.5 V14.5 H5.5 V9.5 H0.5 V5.5 H5.5 Z" fill="url(#plg)" stroke="#2a8a0e" stroke-width="1"/><path d="M6.2,1.2 H8 V6.2 H6.8 V7.6 H1.2 V6.2 H6.2 Z" fill="#a4ee8c" opacity="0.8"/></svg>
<div class="a" style="left:775px;top:451px;width:163px;height:77px;background:#fff"></div>
<b class="t" style="left:782.70px;top:452.50px;font-size:14px;line-height:14px;font-weight:700;letter-spacing:0.256px;color:#000;">20/11/2020</b>
<svg class="a" style="left:918px;top:455px" width="15" height="15" viewBox="0 0 15 15"><path d="M5.5,0.5 H9.5 V5.5 H14.5 V9.5 H9.5 V14.5 H5.5 V9.5 H0.5 V5.5 H5.5 Z" fill="url(#plg)" stroke="#2a8a0e" stroke-width="1"/><path d="M6.2,1.2 H8 V6.2 H6.8 V7.6 H1.2 V6.2 H6.2 Z" fill="#a4ee8c" opacity="0.8"/></svg>
<div class="a" style="left:939px;top:451px;width:163px;height:77px;background:#fff"></div>
<b class="t" style="left:946.70px;top:452.50px;font-size:14px;line-height:14px;font-weight:700;letter-spacing:0.256px;color:#000;">21/11/2020</b>
<svg class="a" style="left:1082px;top:455px" width="15" height="15" viewBox="0 0 15 15"><path d="M5.5,0.5 H9.5 V5.5 H14.5 V9.5 H9.5 V14.5 H5.5 V9.5 H0.5 V5.5 H5.5 Z" fill="url(#plg)" stroke="#2a8a0e" stroke-width="1"/><path d="M6.2,1.2 H8 V6.2 H6.8 V7.6 H1.2 V6.2 H6.2 Z" fill="#a4ee8c" opacity="0.8"/></svg>
<div class="a" style="left:1103px;top:451px;width:163px;height:77px;background:#f2f2f2"></div>
<b class="t" style="left:1110.70px;top:452.50px;font-size:14px;line-height:14px;font-weight:700;letter-spacing:0.256px;color:#000;">22/11/2020</b>
<div class="a" style="left:1px;top:529px;width:114px;height:77px;background:#f2f2f2"></div>
<b class="t" style="left:32.40px;top:560.40px;font-size:14px;line-height:14px;font-weight:700;letter-spacing:0.021px;color:#444;">Tuần 13</b>
<div class="a" style="left:116px;top:529px;width:164px;height:77px;background:#fff"></div>
<b class="t" style="left:123.70px;top:530.50px;font-size:14px;line-height:14px;font-weight:700;letter-spacing:0.256px;color:#000;">23/11/2020</b>
<svg class="a" style="left:260px;top:533px" width="15" height="15" viewBox="0 0 15 15"><path d="M5.5,0.5 H9.5 V5.5 H14.5 V9.5 H9.5 V14.5 H5.5 V9.5 H0.5 V5.5 H5.5 Z" fill="url(#plg)" stroke="#2a8a0e" stroke-width="1"/><path d="M6.2,1.2 H8 V6.2 H6.8 V7.6 H1.2 V6.2 H6.2 Z" fill="#a4ee8c" opacity="0.8"/></svg>
<div class="a" style="left:281px;top:529px;width:164px;height:77px;background:#fff"></div>
<b class="t" style="left:288.70px;top:530.50px;font-size:14px;line-height:14px;font-weight:700;letter-spacing:0.256px;color:#000;">24/11/2020</b>
<svg class="a" style="left:425px;top:533px" width="15" height="15" viewBox="0 0 15 15"><path d="M5.5,0.5 H9.5 V5.5 H14.5 V9.5 H9.5 V14.5 H5.5 V9.5 H0.5 V5.5 H5.5 Z" fill="url(#plg)" stroke="#2a8a0e" stroke-width="1"/><path d="M6.2,1.2 H8 V6.2 H6.8 V7.6 H1.2 V6.2 H6.2 Z" fill="#a4ee8c" opacity="0.8"/></svg>
<div class="a" style="left:446px;top:529px;width:164px;height:77px;background:#fff"></div>
<b class="t" style="left:453.70px;top:530.50px;font-size:14px;line-height:14px;font-weight:700;letter-spacing:0.256px;color:#000;">25/11/2020</b>
<svg class="a" style="left:590px;top:533px" width="15" height="15" viewBox="0 0 15 15"><path d="M5.5,0.5 H9.5 V5.5 H14.5 V9.5 H9.5 V14.5 H5.5 V9.5 H0.5 V5.5 H5.5 Z" fill="url(#plg)" stroke="#2a8a0e" stroke-width="1"/><path d="M6.2,1.2 H8 V6.2 H6.8 V7.6 H1.2 V6.2 H6.2 Z" fill="#a4ee8c" opacity="0.8"/></svg>
<div class="a" style="left:611px;top:529px;width:163px;height:77px;background:#fff"></div>
<b class="t" style="left:618.70px;top:530.50px;font-size:14px;line-height:14px;font-weight:700;letter-spacing:0.256px;color:#000;">26/11/2020</b>
<svg class="a" style="left:754px;top:533px" width="15" height="15" viewBox="0 0 15 15"><path d="M5.5,0.5 H9.5 V5.5 H14.5 V9.5 H9.5 V14.5 H5.5 V9.5 H0.5 V5.5 H5.5 Z" fill="url(#plg)" stroke="#2a8a0e" stroke-width="1"/><path d="M6.2,1.2 H8 V6.2 H6.8 V7.6 H1.2 V6.2 H6.2 Z" fill="#a4ee8c" opacity="0.8"/></svg>
<div class="a" style="left:775px;top:529px;width:163px;height:77px;background:#fff"></div>
<b class="t" style="left:782.70px;top:530.50px;font-size:14px;line-height:14px;font-weight:700;letter-spacing:0.256px;color:#000;">27/11/2020</b>
<svg class="a" style="left:918px;top:533px" width="15" height="15" viewBox="0 0 15 15"><path d="M5.5,0.5 H9.5 V5.5 H14.5 V9.5 H9.5 V14.5 H5.5 V9.5 H0.5 V5.5 H5.5 Z" fill="url(#plg)" stroke="#2a8a0e" stroke-width="1"/><path d="M6.2,1.2 H8 V6.2 H6.8 V7.6 H1.2 V6.2 H6.2 Z" fill="#a4ee8c" opacity="0.8"/></svg>
<div class="a" style="left:939px;top:529px;width:163px;height:77px;background:#fff"></div>
<b class="t" style="left:946.70px;top:530.50px;font-size:14px;line-height:14px;font-weight:700;letter-spacing:0.256px;color:#000;">28/11/2020</b>
<svg class="a" style="left:1082px;top:533px" width="15" height="15" viewBox="0 0 15 15"><path d="M5.5,0.5 H9.5 V5.5 H14.5 V9.5 H9.5 V14.5 H5.5 V9.5 H0.5 V5.5 H5.5 Z" fill="url(#plg)" stroke="#2a8a0e" stroke-width="1"/><path d="M6.2,1.2 H8 V6.2 H6.8 V7.6 H1.2 V6.2 H6.2 Z" fill="#a4ee8c" opacity="0.8"/></svg>
<div class="a" style="left:1103px;top:529px;width:163px;height:77px;background:#f2f2f2"></div>
<b class="t" style="left:1110.70px;top:530.50px;font-size:14px;line-height:14px;font-weight:700;letter-spacing:0.256px;color:#000;">29/11/2020</b>
<div class="a" style="left:1px;top:607px;width:114px;height:73px;background:#f2f2f2"></div>
<b class="t" style="left:32.40px;top:636.00px;font-size:14px;line-height:14px;font-weight:700;letter-spacing:0.021px;color:#444;">Tuần 14</b>
<div class="a" style="left:116px;top:607px;width:164px;height:73px;background:#fff"></div>
<b class="t" style="left:123.70px;top:608.50px;font-size:14px;line-height:14px;font-weight:700;letter-spacing:0.256px;color:#000;">30/11/2020</b>
<svg class="a" style="left:260px;top:611px" width="15" height="15" viewBox="0 0 15 15"><path d="M5.5,0.5 H9.5 V5.5 H14.5 V9.5 H9.5 V14.5 H5.5 V9.5 H0.5 V5.5 H5.5 Z" fill="url(#plg)" stroke="#2a8a0e" stroke-width="1"/><path d="M6.2,1.2 H8 V6.2 H6.8 V7.6 H1.2 V6.2 H6.2 Z" fill="#a4ee8c" opacity="0.8"/></svg>
<div class="a" style="left:281px;top:607px;width:164px;height:73px;background:#f2f2f2"></div>
<div class="a" style="left:446px;top:607px;width:164px;height:73px;background:#f2f2f2"></div>
<div class="a" style="left:611px;top:607px;width:163px;height:73px;background:#f2f2f2"></div>
<div class="a" style="left:775px;top:607px;width:163px;height:73px;background:#f2f2f2"></div>
<div class="a" style="left:939px;top:607px;width:163px;height:73px;background:#f2f2f2"></div>
<div class="a" style="left:1103px;top:607px;width:163px;height:73px;background:#f2f2f2"></div>
<div class="a" style="left:1px;top:686px;width:1266px;height:32px;background:#dfe8f5"></div>
<b class="t" style="left:200.20px;top:699.00px;font-size:12.5px;line-height:12.5px;font-weight:700;transform:scaleX(0.9684);color:#111;">Copyright © 2014 - 2020 MISA JSC</b>
<span class="t" style="left:408.40px;top:699.00px;font-size:12.5px;line-height:12.5px;transform:scaleX(0.9081);color:#333;">Tầng 9 - Tòa nhà TECHNOSOFT, Phố Duy Tân, Q.Cầu Giấy, Hà Nội |</span>
<b class="t" style="left:762.40px;top:699.00px;font-size:12.5px;line-height:12.5px;font-weight:700;transform:scaleX(0.9601);color:#111;">Tư vấn hỗ trợ: 1900-8677</b>
<span class="t" style="left:908.90px;top:699.00px;font-size:12.5px;line-height:12.5px;transform:scaleX(0.9167);color:#333;">| Email:</span>
<u class="t" style="left:949.40px;top:699.00px;font-size:12.5px;line-height:12.5px;transform:scaleX(0.9555);color:#0000e6;text-decoration:underline;">support@misa.com.vn</u>
<div class="frame"></div>
<div class="a" style="left:0;top:295px;width:115px;height:383px;box-sizing:border-box;border:3px solid #fb3c3e"></div>
</div></body></html>
